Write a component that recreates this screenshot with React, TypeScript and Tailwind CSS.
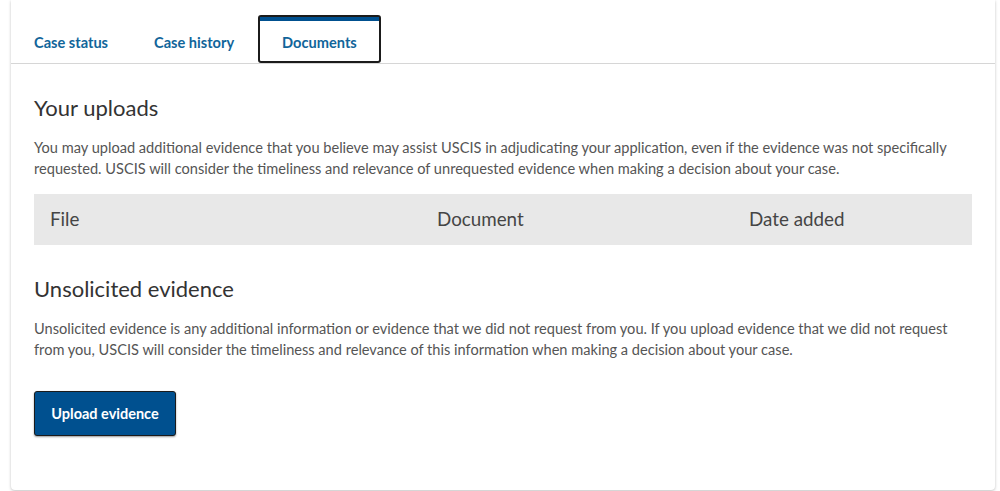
const tabs = ['Case status', 'Case history', 'Documents']

export default function App() {
  return (
    <div className="h-[491px] w-[1000px] overflow-hidden bg-white" style={{ fontFamily: 'Lato, "Noto Sans", sans-serif' }}>
      <div className="ml-[11px] h-[490px] w-[984px] rounded-b-[4px] bg-white shadow-[0_1px_3px_rgba(0,0,0,0.25)]">
        {/* Tabs */}
        <div className="flex h-[64px] items-end gap-[2px] border-b border-[#d6d6d6] pl-px">
          {tabs.map(tab =>
            tab === 'Documents' ? (
              <div
                key={tab}
                className="relative flex h-[48px] items-center rounded-[3px] border-2 border-[#1b1b1b] px-[22px] text-[14.6px] font-bold text-[#11659a]"
              >
                <span className="absolute left-0 right-0 top-0 h-[4px] bg-[#00508f]" />
                <span className="pt-[8px]">{tab}</span>
              </div>
            ) : (
              <div key={tab} className="flex h-[48px] items-center px-[22px] text-[14.6px] font-bold text-[#11659a]">
                <span className="pt-[8px]">{tab}</span>
              </div>
            )
          )}
        </div>

        <div className="px-[23px]">
          <h2 className="mt-[30px] text-[22px] leading-[28px] text-[#333]">Your uploads</h2>
          <p className="mt-[15px] text-[14.6px] leading-[21px] text-[#555]">
            You may upload additional evidence that you believe may assist USCIS in adjudicating your application, even if the evidence was not specifically requested. USCIS will consider the timeliness and relevance of unrequested evidence when making a decision about your case.
          </p>

          <div className="mt-[15px] grid h-[51px] grid-cols-[387px_312px_1fr] items-center bg-[#e8e8e8] text-[18.8px] text-[#454545]">
            <div className="pl-[16px]">File</div>
            <div className="pl-[16px]">Document</div>
            <div className="pl-[16px]">Date added</div>
          </div>

          <h2 className="mt-[30px] text-[22px] leading-[28px] text-[#333]">Unsolicited evidence</h2>
          <p className="mt-[15px] text-[14.6px] leading-[21px] text-[#555]">
            Unsolicited evidence is any additional information or evidence that we did not request from you. If you upload evidence that we did not request from you, USCIS will consider the timeliness and relevance of this information when making a decision about your case.
          </p>

          <button className="mt-[31px] flex h-[45px] w-[142px] items-center justify-center rounded-[3px] border border-[#1b1b1b] bg-[#00508f] text-[14.5px] font-bold text-white shadow-[0_1px_2px_rgba(0,0,0,0.4)]">
            Upload evidence
          </button>
        </div>
      </div>
    </div>
  )
}
